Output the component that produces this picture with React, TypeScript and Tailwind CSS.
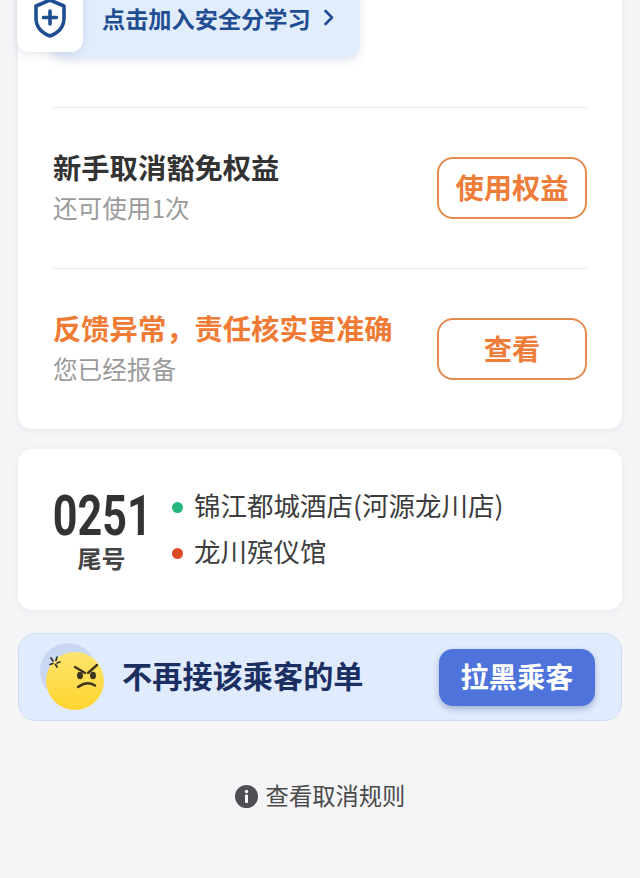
const cjk = "font-['Noto_Sans_CJK_SC','Noto_Sans',sans-serif]"

function ShieldIcon() {
  return (
    <svg width="34" height="40" viewBox="0 0 34 40" fill="none">
      <path d="M17 2 L31 8 V20 C31 29 25 35 17 38 C9 35 3 29 3 20 V8 Z" stroke="#1f4e93" strokeWidth="3.6" strokeLinejoin="round" />
      <path d="M17 13 V26 M10.5 19.5 H23.5" stroke="#1f4e93" strokeWidth="3.6" strokeLinecap="round" />
    </svg>
  )
}

function AngryFace() {
  return (
    <svg width="66" height="68" viewBox="0 0 66 68" fill="none">
      <defs>
        <linearGradient id="face" x1="0" y1="0" x2="0" y2="1">
          <stop offset="0" stopColor="#fde56f" />
          <stop offset="1" stopColor="#ffd52e" />
        </linearGradient>
      </defs>
      <circle cx="28" cy="28" r="28" fill="#c9d7f3" />
      <circle cx="35" cy="38" r="29" fill="url(#face)" />
      <path d="M11 15 L13 18 M17 14 L16 17.5 M20 19 L17 20 M10 21.5 L13 20.5 M17 24 L15.5 21.5" stroke="#2f2f2f" strokeWidth="1.7" strokeLinecap="round" />
      <path d="M35 24 L45 30 M57 22 L48 30" stroke="#3d3520" strokeWidth="2.4" strokeLinecap="round" />
      <ellipse cx="40" cy="32.5" rx="3" ry="3.8" fill="#3d3520" />
      <ellipse cx="53" cy="32.5" rx="3" ry="3.8" fill="#3d3520" />
      <path d="M38 44 C42 41 48 38 55 42.5" stroke="#3d3520" strokeWidth="2.4" strokeLinecap="round" />
    </svg>
  )
}

function InfoIcon() {
  return (
    <svg width="23" height="23" viewBox="0 0 23 23">
      <circle cx="11.5" cy="11.5" r="11.5" fill="#4d4f54" />
      <circle cx="11.5" cy="6.5" r="1.7" fill="#fff" />
      <rect x="10" y="9.5" width="3" height="8.5" rx="1" fill="#fff" />
    </svg>
  )
}

function ActionRow({ title, sub, action, warn }: { title: string; sub: string; action: string; warn?: boolean }) {
  return (
    <div className="flex h-[160px] items-center justify-between">
      <div className="pb-[3px]">
        <div className={warn ? 'text-[28.3px] leading-[40px] font-bold text-[#f07b35]' : 'text-[28.3px] leading-[40px] font-bold text-[#333333]'}>
          {title}
        </div>
        <div className="text-[24.6px] leading-[40px] text-[#9a9a9a]">{sub}</div>
      </div>
      <button className="flex h-[62px] w-[150px] items-center justify-center rounded-[16px] border-2 border-[#e58a50] pb-[2px] text-[28.3px] font-bold text-[#ee7d3a]">
        {action}
      </button>
    </div>
  )
}

export default function App() {
  return (
    <div className={`flex h-[878px] flex-col overflow-hidden bg-[#f5f5f8] ${cjk}`}>
      {/* Top card, scrolled partly out of view */}
      <div className="relative mx-[18px] mt-[-40px] rounded-[14px] bg-white pb-0 shadow-[0_1px_6px_rgba(60,70,90,0.08)]">
        <div className="ml-[32px] flex h-[97px] w-[310px] items-end rounded-[14px] bg-[#e2edfc] pb-[22px] pl-[52px] shadow-[0_4px_8px_rgba(90,110,160,0.18)]">
          <span className="text-[23.2px] leading-[34px] font-bold text-[#1f4e93]">点击加入安全分学习</span>
          <svg className="mb-[9px] ml-[12px]" width="12" height="17" viewBox="0 0 12 17" fill="none">
            <path d="M2.5 2 L9 8.5 L2.5 15" stroke="#1f4e93" strokeWidth="2.6" strokeLinecap="round" strokeLinejoin="round" />
          </svg>
        </div>
        <div className="absolute top-0 left-[-1px] flex h-[92px] w-[66px] items-end justify-center rounded-[12px] bg-white pb-[14px] shadow-[0_2px_8px_rgba(70,90,130,0.16)]">
          <ShieldIcon />
        </div>
        <div className="mx-[35px] mt-[50px] border-t border-[#e6e6e8]">
          <ActionRow title="新手取消豁免权益" sub="还可使用1次" action="使用权益" />
        </div>
        <div className="mx-[35px] border-t border-[#e6e6e8]">
          <ActionRow title="反馈异常，责任核实更准确" sub="您已经报备" action="查看" warn />
        </div>
      </div>

      {/* Order info */}
      <div className="mx-[18px] mt-[20px] flex h-[161px] items-center rounded-[14px] bg-white px-[35px] shadow-[0_1px_6px_rgba(60,70,90,0.08)]">
        <div className="flex w-[97px] flex-col items-center">
          <div className="origin-center translate-x-[1px] scale-x-[0.77] font-['Roboto',sans-serif] text-[56px] leading-[56px] font-bold text-[#333333]">0251</div>
          <div className="text-[24px] leading-[28px] font-bold text-[#444444]">尾号</div>
        </div>
        <div className="ml-[22px] flex flex-col gap-[8px] pb-[4px]">
          <div className="flex items-center gap-[11px] text-[26.5px] leading-[38px] text-[#3d3d3d]">
            <span className="mt-[6px] size-[11px] rounded-full bg-[#27b67f]" />
            <span>锦江都城酒店(河源龙川店)</span>
          </div>
          <div className="flex items-center gap-[11px] text-[26.5px] leading-[38px] text-[#3d3d3d]">
            <span className="mt-[6px] size-[11px] rounded-full bg-[#dc4a26]" />
            <span>龙川殡仪馆</span>
          </div>
        </div>
      </div>

      {/* Block passenger */}
      <div className="mx-[18px] mt-[23px] flex h-[88px] items-center rounded-[18px] border border-[#cddbf3] bg-[#e0ebfd] pr-[26px] pl-[21px]">
        <AngryFace />
        <span className="mb-[3px] ml-[16px] text-[30.2px] font-bold text-[#1c2f63]">不再接该乘客的单</span>
        <button className="ml-auto flex h-[57px] w-[156px] items-center justify-center rounded-[14px] bg-[#4e74dc] pb-[2px] text-[28.2px] font-bold text-white shadow-[0_3px_6px_rgba(50,70,130,0.35)]">
          拉黑乘客
        </button>
      </div>

      <div className="mt-[57px] flex items-center justify-center gap-[8px]">
        <InfoIcon />
        <span className="pb-[2px] text-[23.3px] leading-[34px] text-[#4a4a4a]">查看取消规则</span>
      </div>
    </div>
  )
}
